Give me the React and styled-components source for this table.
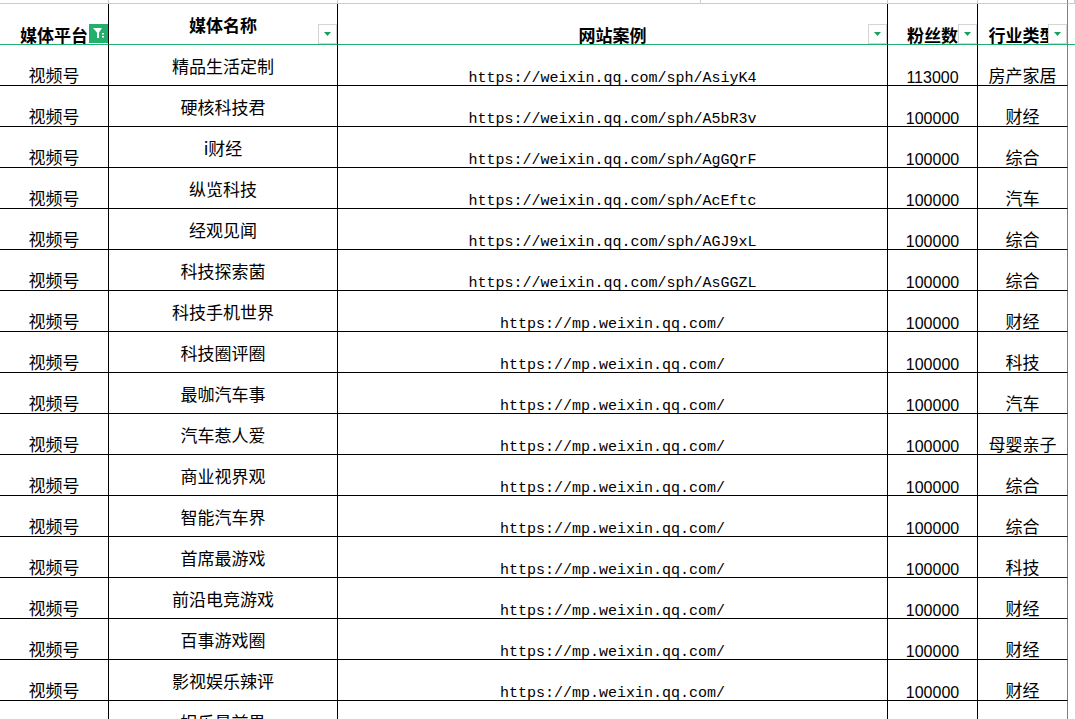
import React from "react";
import styled, { createGlobalStyle } from "styled-components";

const GREEN = "#21b06f";
const GRID = "#000";
const SOFT = "#c9cbd3";
const COLS = "109px 229px 550px 90px 90px 1fr";

const Global = createGlobalStyle`
  html, body { margin: 0; padding: 0; overflow: hidden; background: #fff; }
  body { font-family: "Noto Sans CJK SC", "Liberation Sans", sans-serif; color: #000; }
`;

const Sheet = styled.div`
  width: 1075px;
  height: 719px;
  overflow: hidden;
  background: #fff;
`;

const TopStrip = styled.div`
  display: grid;
  grid-template-columns: 109px 229px 363px 187px 90px 90px 7px 1fr;
  height: 4px;
`;

const TopCell = styled.div`
  box-sizing: border-box;
  border-bottom: 1px solid ${SOFT};
  border-right: ${(p) => (p.$edge ? `1px solid ${GREEN}` : p.$last ? "none" : `1px solid ${SOFT}`)};
`;

const Row = styled.div`
  display: grid;
  grid-template-columns: ${COLS};
  height: 41px;
`;

const Cell = styled.div`
  position: relative;
  box-sizing: border-box;
  display: flex;
  justify-content: center;
  align-items: ${(p) => (p.$center ? "center" : "flex-end")};
  padding-bottom: ${(p) => p.$pb || 0}px;
  border-right: 1px solid ${(p) => (p.$edge ? GREEN : GRID)};
  border-bottom: 1px solid ${(p) => (p.$header ? GREEN : GRID)};
  white-space: nowrap;
`;

const Filler = styled.div`
  box-sizing: border-box;
  border-bottom: ${(p) => (p.$header ? `1px solid ${GREEN}` : "none")};
`;

const HeadText = styled.span`
  font-family: "Noto Sans CJK SC", sans-serif;
  font-weight: 700;
  font-size: 17px;
  line-height: 17px;
`;

const CnText = styled.span`
  font-family: "Noto Sans CJK SC", sans-serif;
  font-size: 17px;
  line-height: 17px;
`;

const UrlText = styled.span`
  font-family: "Liberation Mono", monospace;
  font-size: 15px;
  line-height: 13px;
`;

const NumText = styled.span`
  font-family: "Liberation Sans", sans-serif;
  font-size: 16px;
  line-height: 14px;
`;

const DropButton = styled.div`
  position: absolute;
  right: 0;
  bottom: 0;
  width: 19px;
  height: 20px;
  box-sizing: border-box;
  border: 1px solid #d4d4d4;
  background: #fff;
  display: flex;
  align-items: center;
  justify-content: center;
`;

const FilterButton = styled.div`
  position: absolute;
  right: 0;
  bottom: 1px;
  width: 19px;
  height: 19px;
  background: #22b06c;
  display: flex;
  align-items: center;
  justify-content: center;
`;

const Drop = () => (
  <DropButton>
    <svg width="7" height="4" viewBox="0 0 7 4">
      <polygon points="0,0 7,0 3.5,4" fill="#1e9f5e" />
    </svg>
  </DropButton>
);

const Filter = () => (
  <FilterButton>
    <svg width="19" height="19" viewBox="0 0 19 19">
      <path d="M4 4 H13 L10 8.5 V14 H8 V8.5 Z" fill="#fff" />
      <rect x="13" y="9" width="2" height="1.5" fill="#fff" />
      <rect x="13" y="12" width="2" height="1.5" fill="#fff" />
    </svg>
  </FilterButton>
);

const rows = [
  ["视频号", "精品生活定制", "https://weixin.qq.com/sph/AsiyK4", "113000", "房产家居"],
  ["视频号", "硬核科技君", "https://weixin.qq.com/sph/A5bR3v", "100000", "财经"],
  ["视频号", "i财经", "https://weixin.qq.com/sph/AgGQrF", "100000", "综合"],
  ["视频号", "纵览科技", "https://weixin.qq.com/sph/AcEftc", "100000", "汽车"],
  ["视频号", "经观见闻", "https://weixin.qq.com/sph/AGJ9xL", "100000", "综合"],
  ["视频号", "科技探索菌", "https://weixin.qq.com/sph/AsGGZL", "100000", "综合"],
  ["视频号", "科技手机世界", "https://mp.weixin.qq.com/", "100000", "财经"],
  ["视频号", "科技圈评圈", "https://mp.weixin.qq.com/", "100000", "科技"],
  ["视频号", "最咖汽车事", "https://mp.weixin.qq.com/", "100000", "汽车"],
  ["视频号", "汽车惹人爱", "https://mp.weixin.qq.com/", "100000", "母婴亲子"],
  ["视频号", "商业视界观", "https://mp.weixin.qq.com/", "100000", "综合"],
  ["视频号", "智能汽车界", "https://mp.weixin.qq.com/", "100000", "综合"],
  ["视频号", "首席最游戏", "https://mp.weixin.qq.com/", "100000", "科技"],
  ["视频号", "前沿电竞游戏", "https://mp.weixin.qq.com/", "100000", "财经"],
  ["视频号", "百事游戏圈", "https://mp.weixin.qq.com/", "100000", "财经"],
  ["视频号", "影视娱乐辣评", "https://mp.weixin.qq.com/", "100000", "财经"],
  ["视频号", "娱乐最前界", "https://mp.weixin.qq.com/", "100000", "综合"],
];

export default function App() {
  return (
    <Sheet>
      <Global />
      <TopStrip>
        <TopCell />
        <TopCell />
        <TopCell />
        <TopCell />
        <TopCell />
        <TopCell $edge />
        <TopCell />
        <TopCell $last />
      </TopStrip>
      <Row>
        <Cell $header $pb={1}>
          <HeadText>媒体平台</HeadText>
          <Filter />
        </Cell>
        <Cell $header $center>
          <HeadText>媒体名称</HeadText>
          <Drop />
        </Cell>
        <Cell $header $pb={1}>
          <HeadText>网站案例</HeadText>
          <Drop />
        </Cell>
        <Cell $header $pb={1}>
          <HeadText>粉丝数</HeadText>
          <Drop />
        </Cell>
        <Cell $header $pb={1} $edge>
          <HeadText>行业类型</HeadText>
          <Drop />
        </Cell>
        <Filler $header />
      </Row>
      {rows.map((r, i) => (
        <Row key={i}>
          <Cell $pb={2}>
            <CnText>{r[0]}</CnText>
          </Cell>
          <Cell $center>
            <CnText>{r[1]}</CnText>
          </Cell>
          <Cell $pb={0}>
            <UrlText>{r[2]}</UrlText>
          </Cell>
          <Cell>
            <NumText>{r[3]}</NumText>
          </Cell>
          <Cell $pb={2} $edge>
            <CnText>{r[4]}</CnText>
          </Cell>
          <Filler />
        </Row>
      ))}
    </Sheet>
  );
}
